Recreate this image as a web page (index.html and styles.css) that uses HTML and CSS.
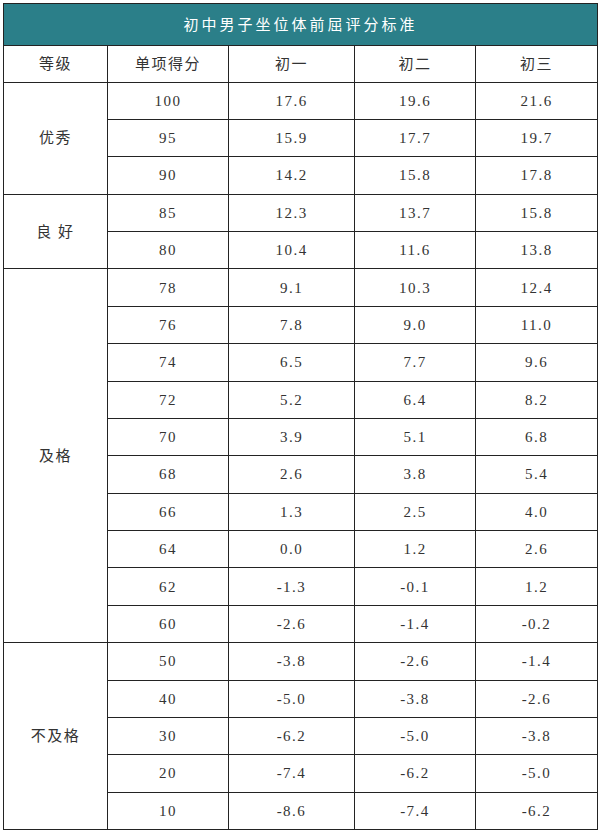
FILE: index.html
```html
<!DOCTYPE html>
<html lang="zh">
<head>
<meta charset="utf-8">
<title>初中男子坐位体前屈评分标准</title>
<link rel="stylesheet" href="styles.css">
</head>
<body>
<div class="page">
<table class="score">
<colgroup>
<col class="c1"><col class="c2"><col class="c3"><col class="c4"><col class="c5">
</colgroup>
<thead>
<tr class="title"><th colspan="5">初中男子坐位体前屈评分标准</th></tr>
<tr class="head"><th>等级</th><th>单项得分</th><th>初一</th><th>初二</th><th>初三</th></tr>
</thead>
<tbody>
<tr><td rowspan="3" class="grade">优秀</td><td>100</td><td>17.6</td><td>19.6</td><td>21.6</td></tr>
<tr><td>95</td><td>15.9</td><td>17.7</td><td>19.7</td></tr>
<tr><td>90</td><td>14.2</td><td>15.8</td><td>17.8</td></tr>
<tr><td rowspan="2" class="grade">良 好</td><td>85</td><td>12.3</td><td>13.7</td><td>15.8</td></tr>
<tr><td>80</td><td>10.4</td><td>11.6</td><td>13.8</td></tr>
<tr><td rowspan="10" class="grade">及格</td><td>78</td><td>9.1</td><td>10.3</td><td>12.4</td></tr>
<tr><td>76</td><td>7.8</td><td>9.0</td><td>11.0</td></tr>
<tr><td>74</td><td>6.5</td><td>7.7</td><td>9.6</td></tr>
<tr><td>72</td><td>5.2</td><td>6.4</td><td>8.2</td></tr>
<tr><td>70</td><td>3.9</td><td>5.1</td><td>6.8</td></tr>
<tr><td>68</td><td>2.6</td><td>3.8</td><td>5.4</td></tr>
<tr><td>66</td><td>1.3</td><td>2.5</td><td>4.0</td></tr>
<tr><td>64</td><td>0.0</td><td>1.2</td><td>2.6</td></tr>
<tr><td>62</td><td>-1.3</td><td>-0.1</td><td>1.2</td></tr>
<tr><td>60</td><td>-2.6</td><td>-1.4</td><td>-0.2</td></tr>
<tr><td rowspan="5" class="grade">不及格</td><td>50</td><td>-3.8</td><td>-2.6</td><td>-1.4</td></tr>
<tr><td>40</td><td>-5.0</td><td>-3.8</td><td>-2.6</td></tr>
<tr><td>30</td><td>-6.2</td><td>-5.0</td><td>-3.8</td></tr>
<tr><td>20</td><td>-7.4</td><td>-6.2</td><td>-5.0</td></tr>
<tr><td>10</td><td>-8.6</td><td>-7.4</td><td>-6.2</td></tr>
</tbody>
</table>
</div>
</body>
</html>
```
FILE: styles.css
```css
html, body {
  margin: 0;
  padding: 0;
  background: #ffffff;
}
.page {
  padding: 3px 0 0 3px;
}
.score {
  border-collapse: collapse;
  table-layout: fixed;
  width: 594px;
  font-family: "Liberation Serif", "Noto Sans CJK SC", serif;
  color: #333333;
  font-size: 15px;
  line-height: 18px;
}
.c1 { width: 104px; }
.c2 { width: 121px; }
.c3 { width: 126px; }
.c4 { width: 121px; }
.c5 { width: 122px; }
.score th, .score td {
  border: 1.5px solid #232323;
  text-align: center;
  vertical-align: middle;
  padding: 0;
  font-weight: normal;
  letter-spacing: 1.5px;
}
.title th {
  height: 41px;
  background: #2b7f89;
  color: #ffffff;
  letter-spacing: 3px;
  font-size: 15px;
}
.head th {
  height: 35.5px;
  font-size: 15px;
}
.score tbody td {
  height: 36.38px;
}
.grade {
  font-size: 15px;
}
```
